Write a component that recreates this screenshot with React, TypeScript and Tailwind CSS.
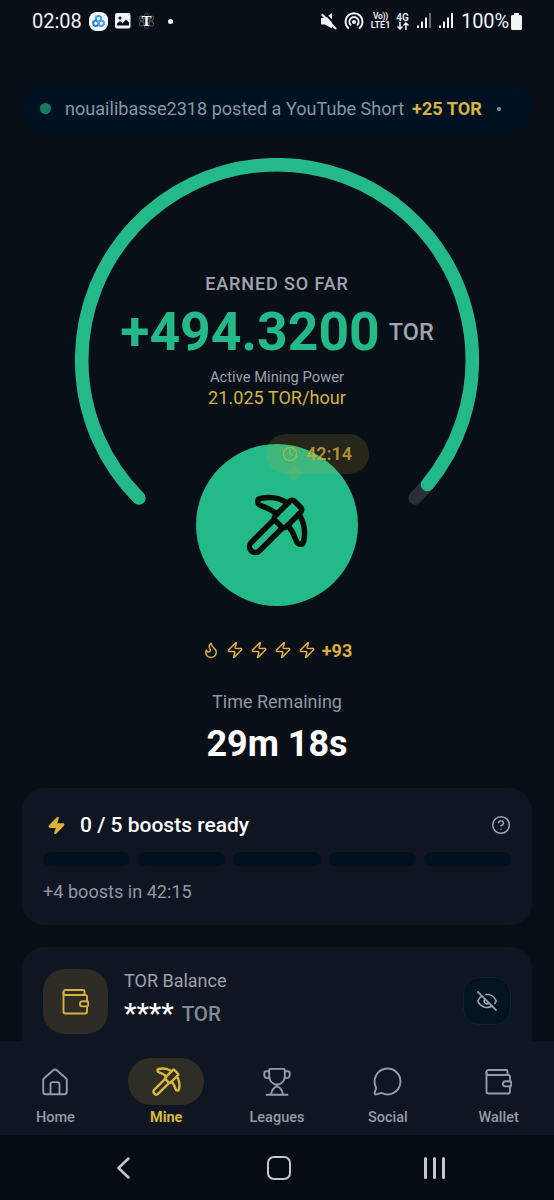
import { Pickaxe, Flame, Zap, Clock, CircleHelp, EyeOff, MessageCircle } from "lucide-react";
import type { ReactNode } from "react";

const R = 195.3;
const point = (deg: number) => {
  const a = (deg * Math.PI) / 180;
  return `${202 + R * Math.cos(a)} ${202 + R * Math.sin(a)}`;
};

function WalletIcon({ size, stroke = 1.6 }: { size: number; stroke?: number }) {
  return (
    <svg width={size} height={size} viewBox="0 0 27 27" fill="none" stroke="currentColor" strokeWidth={stroke} strokeLinecap="round" strokeLinejoin="round">
      <path d="M22.500 6.500V3.500A1.500 1.500 0 0 0 21 2H3.500A2 2 0 0 0 1.500 4v1.200A1.800 1.800 0 0 0 3.300 7H23.500A1.500 1.500 0 0 1 25 8.500V13.500" />
      <path d="M1.500 4.500V23.500A2 2 0 0 0 3.500 25.500H23A2 2 0 0 0 25 23.500V18.500" />
      <path d="M20.500 13.200H25A1.300 1.300 0 0 1 26.200 14.500V17.100A1.300 1.300 0 0 1 25 18.400H20.500A2.600 2.600 0 0 1 20.500 13.200z" />
    </svg>
  );
}

function HomeIcon() {
  return (
    <svg width="28" height="28" viewBox="0 0 28 28" fill="none" stroke="currentColor" strokeWidth="1.900" strokeLinejoin="round">
      <path d="M2.200 12.300a3 3 0 0 1 1.100-2.300l8.900-7.800a2.700 2.700 0 0 1 3.600 0l8.900 7.800a3 3 0 0 1 1.100 2.300v11.500a2.500 2.500 0 0 1-2.500 2.500H4.700a2.500 2.500 0 0 1-2.500-2.500z" />
      <path d="M9.500 26.300V16.300a2.200 2.200 0 0 1 2.200-2.200h4.600a2.200 2.200 0 0 1 2.200 2.200v10" />
    </svg>
  );
}

function TrophyIcon() {
  return (
    <svg width="30" height="30" viewBox="0 0 30 30" fill="none" stroke="currentColor" strokeWidth="1.900" strokeLinecap="round" strokeLinejoin="round">
      <path d="M8.200 1.900h13.600a1 1 0 0 1 1 1V9.500c0 4-3 7.500-7.800 8.300-4.800-.8-7.800-4.300-7.800-8.300V2.900a1 1 0 0 1 1-1z" />
      <path d="M7.200 4.300H4.300a2 2 0 0 0-2 2v1.800a3 3 0 0 0 3 3h2.200M22.800 4.300h2.900a2 2 0 0 1 2 2v1.800a3 3 0 0 1-3 3h-2.200" />
      <path d="M15 17.800v1.500c-3.300 1-5.500 4-6 8.500M15 19.300c3.300 1 5.500 4 6 8.500M4.500 27.800h21" />
    </svg>
  );
}

function StatusBar() {
  return (
    <header className="flex h-[42px] shrink-0 items-center justify-between pr-[32px] pl-[32px] text-[#f1f3f5]">
      <div className="flex items-center">
        <span className="w-[57px] text-[20px] leading-6">02:08</span>
        <svg width="19" height="19" viewBox="0 0 19 19" fill="none">
          <rect width="19" height="19" rx="7.500" fill="#f5fbff" />
          <g strokeWidth="2">
            <circle cx="9.500" cy="6.700" r="2.700" stroke="#35a5e3" />
            <circle cx="6.800" cy="11.200" r="2.700" stroke="#2388d0" />
            <circle cx="12.200" cy="11.200" r="2.700" stroke="#3aa2e8" />
          </g>
          <circle cx="9.500" cy="9.800" r="1.800" fill="#a982d8" />
        </svg>
        <svg className="ml-[7px]" width="16" height="16" viewBox="0 0 16 16">
          <rect width="15.500" height="15.500" rx="2" fill="#f1f3f5" />
          <circle cx="5" cy="5" r="1.500" fill="#080f17" />
          <path d="M2 12.500V10.500L5 8l2.500 2.200L11 6.500l3 3v3z" fill="#080f17" />
        </svg>
        <span className="relative ml-[7px] flex h-[18px] w-[17px] items-center justify-center">
          <svg className="absolute inset-0" width="17" height="18" viewBox="0 0 17 18" fill="none" stroke="#4c5259" strokeWidth="0.900">
            <ellipse cx="8.500" cy="9" rx="3" ry="8" />
            <ellipse cx="8.500" cy="9" rx="3" ry="8" transform="rotate(60 8.500 9)" />
            <ellipse cx="8.500" cy="9" rx="3" ry="8" transform="rotate(120 8.500 9)" />
          </svg>
          <span className="relative font-['Liberation_Serif',serif] text-[15px] leading-[18px] font-bold text-white">T</span>
        </span>
        <span className="ml-[13px] size-[5px] rounded-full bg-white" />
      </div>
      <div className="flex items-center">
        <svg width="16" height="17" viewBox="0 0 16 17">
          <path d="M0 5h4L11 0v15.500L4 11.500H1a1 1 0 0 1-1-1z" fill="currentColor" />
          <path d="M2-1.500 17.500 14.500" stroke="#080f17" strokeWidth="2" />
          <path d="M.8 1.200 15 16" stroke="currentColor" strokeWidth="2.200" />
        </svg>
        <svg className="ml-[7px]" width="20" height="18" viewBox="0 0 20 18" fill="none" stroke="currentColor" strokeWidth="2" strokeLinecap="round">
          <path d="M4.300 16A8.500 8.500 0 1 1 15.700 16" />
          <path d="M6.500 12.700A4.600 4.600 0 1 1 13.500 12.700" />
          <circle cx="10" cy="10" r="1" fill="currentColor" />
        </svg>
        <div className="ml-[6px] flex w-[21px] flex-col items-center text-[9px] leading-[9px] font-semibold">
          <span className="text-[8.500px] tracking-[-0.300px]">Vo))</span>
          <span>LTE1</span>
        </div>
        <div className="ml-[5px] flex w-[13px] flex-col items-center text-[10px] leading-[9px] font-semibold">
          <span>4G</span>
          <svg width="12" height="8" viewBox="0 0 12 8" fill="none" stroke="currentColor" strokeWidth="1.500">
            <path d="M3 0v6.500M.5 4.500 3 7l2.500-2.500M9 8V1.500M6.500 3.500 9 1l2.500 2.500" />
          </svg>
        </div>
        <svg className="ml-[8px]" width="36" height="16" viewBox="0 0 36 16" fill="currentColor">
          <path d="M0 12.500h2V15H0zM4 8.500h2V15H4zM8 4.500h2V15H8zM22 12.500h2V15h-2zM26 8.500h2V15h-2zM30 4.500h2V15h-2zM34 0h2v15h-2z" />
          <path d="M12 0h2v15h-2z" opacity="0.400" />
        </svg>
        <span className="ml-[8px] w-[50px] text-[20px] leading-6 tracking-[-0.100px] whitespace-nowrap">100%</span>
        <svg width="11" height="17" viewBox="0 0 11 17" fill="currentColor">
          <path d="M3 0h5v2h1.500A1.500 1.500 0 0 1 11 3.500v12A1.500 1.500 0 0 1 9.500 17h-8A1.500 1.500 0 0 1 0 15.500v-12A1.500 1.500 0 0 1 1.500 2H3z" />
        </svg>
      </div>
    </header>
  );
}

function MiningDial() {
  return (
    <section className="relative mx-auto mt-[26px] h-[448px] w-[404px] shrink-0">
      <svg className="absolute top-0 left-0" width="404" height="404" viewBox="0 0 404 404" fill="none" strokeWidth="13.500" strokeLinecap="round">
        <path d={`M${point(135)}A${R} ${R} 0 1 1 ${point(45)}`} stroke="#292f38" />
        <path d={`M${point(135)}A${R} ${R} 0 1 1 ${point(39.6)}`} stroke="#23b989" />
      </svg>
      <div className="relative flex flex-col items-center pt-[114px]">
        <div className="text-[18px] leading-6 font-medium tracking-[0.9px] text-[#a0a3b0]">EARNED SO FAR</div>
        <div className="mt-[4px] flex items-center whitespace-nowrap">
          <span className="text-[53.5px] leading-[64px] font-bold text-[#23b989]">+494.3200</span>
          <span className="ml-[9px] text-[23.500px] leading-8 font-medium text-[#a0a3b0]">TOR</span>
        </div>
        <div className="mt-[2px] text-[14.75px] leading-[22px] text-[#9da1ad]">Active Mining Power</div>
        <div className="text-[18.100px] leading-[20px] text-[#d4b244]">21.025 TOR/hour</div>
      </div>
      <div className="absolute top-[286px] left-[121px] flex size-[162px] items-center justify-center rounded-full bg-[#23b989] text-[#020d06]">
        <Pickaxe size={66} strokeWidth={2} />
      </div>
      <div className="absolute top-[276px] left-[191px] flex h-[40px] w-[103px] items-center rounded-full bg-[#d4af37]/15 pl-[16px] text-[#d4af37]/80">
        <Clock size={16} strokeWidth={2} />
        <span className="ml-[8px] -mt-[2px] text-[18px] font-semibold">42:14</span>
      </div>
      <div className="absolute top-[309px] left-[213px] size-[12px] rotate-45 bg-[#d4af37]/15" />
    </section>
  );
}

function NavItem({ label, active, children }: { label: string; active?: boolean; children: ReactNode }) {
  return (
    <button className={`flex flex-1 flex-col items-center pt-[17px] ${active ? "text-[#d9b63f]" : "text-[#969aa6]"}`}>
      <span className={`flex h-[47px] w-[76px] items-center justify-center rounded-[23px] ${active ? "bg-[#2e2e27]" : ""}`}>{children}</span>
      <span className={`mt-[3px] text-[14.500px] leading-5 ${active ? "font-bold" : "font-medium"}`}>{label}</span>
    </button>
  );
}

export default function App() {
  return (
    <main className="flex h-[1200px] w-[554px] flex-col overflow-hidden bg-[#080f17] font-[Roboto,sans-serif]">
      <StatusBar />
      <div className="mx-[22px] mt-[43px] flex h-[47px] shrink-0 items-center rounded-full bg-[#001221] pl-[18px] text-[18.080px] whitespace-nowrap text-[#8795a7]">
        <span className="size-[11px] rounded-full bg-[#177c64]" />
        <span className="ml-[14px]">nouailibasse2318 posted a YouTube Short</span>
        <span className="ml-[8px] font-bold text-[#d4b244]">+25 TOR</span>
        <span className="ml-[15px] size-[4px] rounded-full bg-[#8795a7]" />
      </div>
      <MiningDial />
      <div className="mt-[32px] flex h-[24px] shrink-0 items-center justify-center gap-[6px] text-[#d9ad3f]">
        <Flame size={18} strokeWidth={2} />
        <Zap size={18} strokeWidth={2} />
        <Zap size={18} strokeWidth={2} />
        <Zap size={18} strokeWidth={2} />
        <Zap size={18} strokeWidth={2} />
        <span className="text-[18px] font-bold">+93</span>
      </div>
      <div className="mt-[28px] shrink-0 text-center text-[18px] leading-6 text-[#9296a2]">Time Remaining</div>
      <div className="mt-[8px] shrink-0 text-center text-[36px] leading-[44px] font-bold text-white">29m 18s</div>
      <section className="mx-[22px] mt-[22px] h-[137px] shrink-0 rounded-[22px] bg-[#0f1622] px-[21px] pt-[22px]">
        <div className="flex h-[30px] items-center text-white">
          <Zap className="ml-[4px] text-[#d9b13c]" size={19} fill="currentColor" />
          <span className="mt-[1px] ml-[14px] text-[21px] font-medium">0 / 5 boosts ready</span>
          <CircleHelp className="ml-auto text-[#a0a3b0]" size={20} strokeWidth={1.800} />
        </div>
        <div className="mt-[12px] flex gap-[8px]">
          {[0, 1, 2, 3, 4].map((slot) => (
            <span key={slot} className="h-[14px] flex-1 rounded-full bg-[#001221]" />
          ))}
        </div>
        <div className="mt-[14px] text-[18.100px] leading-6 text-[#9296a2]">+4 boosts in 42:15</div>
      </section>
      <section className="mx-[22px] mt-[22px] flex h-[94px] shrink-0 items-start rounded-t-[22px] bg-[#0f1622] pt-[22px] pr-[21px] pl-[21px]">
        <div className="flex size-[65px] items-center justify-center rounded-[22px] bg-[#2d2c26] text-[#d9b13c]">
          <WalletIcon size={27} stroke={1.900} />
        </div>
        <div className="ml-[16px]">
          <div className="text-[18px] leading-6 text-[#9da1ad]">TOR Balance</div>
          <div className="mt-[5px] flex items-center leading-8">
            <span className="text-[28px] font-medium text-white">****</span>
            <span className="ml-[8px] text-[20.500px] font-medium text-[#858a98]">TOR</span>
          </div>
        </div>
        <button className="mt-[8px] ml-auto flex size-[48px] items-center justify-center rounded-[16px] border border-[#14202b] bg-[#041420] text-[#a0a5b2]">
          <EyeOff size={22} strokeWidth={1.700} />
        </button>
      </section>
      <nav className="flex h-[94px] shrink-0 bg-[#0f1622]">
        <NavItem label="Home"><HomeIcon /></NavItem>
        <NavItem label="Mine" active><Pickaxe size={31} strokeWidth={1.900} /></NavItem>
        <NavItem label="Leagues"><TrophyIcon /></NavItem>
        <NavItem label="Social"><MessageCircle size={31} strokeWidth={1.500} /></NavItem>
        <NavItem label="Wallet"><WalletIcon size={27} stroke={1.900} /></NavItem>
      </nav>
      <footer className="flex h-[65px] shrink-0 items-center bg-[#050c13] pl-[116px] text-[#c5c7ca]">
        <svg width="14" height="22" viewBox="0 0 14 22" fill="none" stroke="currentColor" strokeWidth="2.500" strokeLinecap="round" strokeLinejoin="round"><path d="M12.500 1.500 2.500 11l10 9.500" /></svg>
        <span className="ml-[137px] size-[24px] rounded-[7px] border-[2.5px] border-[#c5c7ca]" />
        <span className="ml-[133px] flex gap-[6px]">
          <i className="h-[22px] w-[3px] rounded-full bg-current" />
          <i className="h-[22px] w-[3px] rounded-full bg-current" />
          <i className="h-[22px] w-[3px] rounded-full bg-current" />
        </span>
      </footer>
    </main>
  );
}
